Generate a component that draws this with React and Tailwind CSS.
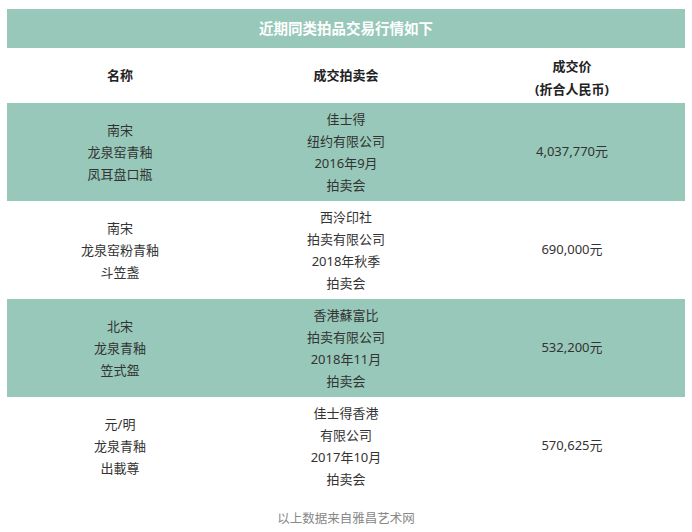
import React from "react";

const rows = [
  {
    name: ["南宋", "龙泉窑青釉", "凤耳盘口瓶"],
    house: ["佳士得", "纽约有限公司", "2016年9月", "拍卖会"],
    price: "4,037,770元",
    green: true,
  },
  {
    name: ["南宋", "龙泉窑粉青釉", "斗笠盏"],
    house: ["西泠印社", "拍卖有限公司", "2018年秋季", "拍卖会"],
    price: "690,000元",
    green: false,
  },
  {
    name: ["北宋", "龙泉青釉", "笠式盌"],
    house: ["香港蘇富比", "拍卖有限公司", "2018年11月", "拍卖会"],
    price: "532,200元",
    green: true,
  },
  {
    name: ["元/明", "龙泉青釉", "出載尊"],
    house: ["佳士得香港", "有限公司", "2017年10月", "拍卖会"],
    price: "570,625元",
    green: false,
  },
];

const Cell = ({ lines }) => (
  <div className="flex flex-col items-center justify-center py-[5px]">
    {lines.map((l, i) => (
      <span key={i} className="leading-[22px]">
        {l}
      </span>
    ))}
  </div>
);

const App = () => {
  return (
    <div
      className="w-[692px] h-[532px] bg-white pt-[9px] text-[13px] text-[#333]"
      style={{ fontFamily: '"Noto Sans", "Noto Sans CJK SC", sans-serif' }}
    >
      <div className="mx-[7px]">
        {/* 标题 */}
        <div className="h-[39px] flex items-center justify-center bg-[#97c8b9] text-white font-bold text-[14.5px]">
          近期同类拍品交易行情如下
        </div>

        {/* 表头 */}
        <div className="grid grid-cols-3 h-[55px] font-bold text-[#222] text-center">
          <div className="flex items-center justify-center">名称</div>
          <div className="flex items-center justify-center">成交拍卖会</div>
          <div className="flex flex-col items-center justify-center pt-[4px]">
            <span className="leading-[23px]">成交价</span>
            <span className="leading-[23px]">(折合人民币)</span>
          </div>
        </div>

        {/* 数据行 */}
        {rows.map((r, i) => (
          <div
            key={i}
            className={`grid grid-cols-3 h-[98px] text-center ${
              r.green ? "bg-[#97c8b9]" : "bg-white"
            }`}
          >
            <Cell lines={r.name} />
            <Cell lines={r.house} />
            <div className="flex items-center justify-center">{r.price}</div>
          </div>
        ))}
      </div>

      <div className="mt-[15px] text-center text-[12.5px] text-[#888]">
        以上数据来自雅昌艺术网
      </div>
    </div>
  );
};

export default App;
